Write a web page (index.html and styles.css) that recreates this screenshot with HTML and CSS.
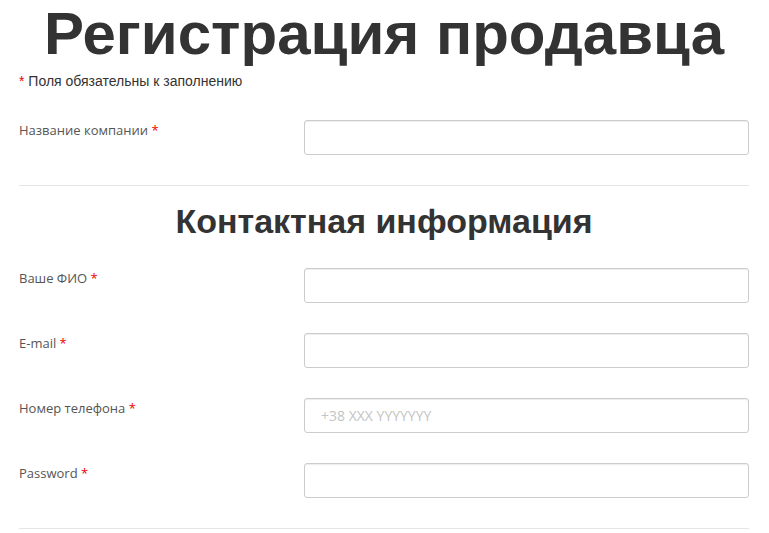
FILE: index.html
```html
<!DOCTYPE html>
<html lang="ru">
<head>
    <meta charset="UTF-8">
    <meta name="viewport" content="width=device-width, initial-scale=1.0">
    <title>Регистрация продавца</title>
    <link rel="stylesheet" href="styles.css">
</head>
<body>
    <div class="page">
        <h1>Регистрация продавца</h1>
        <p class="note"><span class="req">*</span> Поля обязательны к заполнению</p>

        <div class="row first">
            <label for="company">Название компании <span class="req">*</span></label>
            <input type="text" id="company">
        </div>

        <hr>

        <h2>Контактная информация</h2>

        <div class="row">
            <label for="name">Ваше ФИО <span class="req">*</span></label>
            <input type="text" id="name">
        </div>
        <div class="row">
            <label for="email">E-mail <span class="req">*</span></label>
            <input type="text" id="email">
        </div>
        <div class="row">
            <label for="phone">Номер телефона <span class="req">*</span></label>
            <input type="text" id="phone" placeholder="+38 XXX YYYYYYY">
        </div>
        <div class="row">
            <label for="password">Password <span class="req">*</span></label>
            <input type="password" id="password">
        </div>

        <hr>
    </div>
</body>
</html>
```

FILE: styles.css
```css
body {
    margin: 0;
    background: #fff;
    color: #333;
    font-family: 'Open Sans', sans-serif;
}
.page {
    padding: 0 20px 0 19px;
}
h1 {
    margin: 0;
    padding-top: 1px;
    text-align: center;
    font-family: 'Liberation Sans', Arial, sans-serif;
    font-size: 60px;
    line-height: 66px;
    font-weight: bold;
    color: #333;
}
h2 {
    margin: 0;
    text-align: center;
    font-family: 'Liberation Sans', Arial, sans-serif;
    font-size: 34px;
    line-height: 36px;
    font-weight: bold;
    color: #333;
    padding: 17px 0 29px;
}
.note {
    margin: 6px 0 0;
    font-family: 'Liberation Sans', Arial, sans-serif;
    font-size: 14px;
    line-height: 16px;
    color: #333;
}
.req {
    color: #e00;
}
.row {
    display: grid;
    grid-template-columns: 285px 1fr;
    margin-bottom: 30px;
}
.row.first {
    margin-top: 31px;
}
label {
    font-size: 13px;
    line-height: 18px;
    color: #555;
    padding-top: 1px;
}
input {
    box-sizing: border-box;
    height: 35px;
    width: 100%;
    margin: 0;
    padding: 0 16px;
    border: 1px solid #ccc;
    border-radius: 3px;
    box-shadow: inset 0 1px 1px rgba(0, 0, 0, 0.075);
    font-family: 'Open Sans', sans-serif;
    font-size: 14px;
    color: #555;
    background: #fff;
}
input::placeholder {
    color: #c4c4c4;
}
hr {
    margin: 0;
    border: none;
    border-top: 1px solid #e5e5e5;
}
```
